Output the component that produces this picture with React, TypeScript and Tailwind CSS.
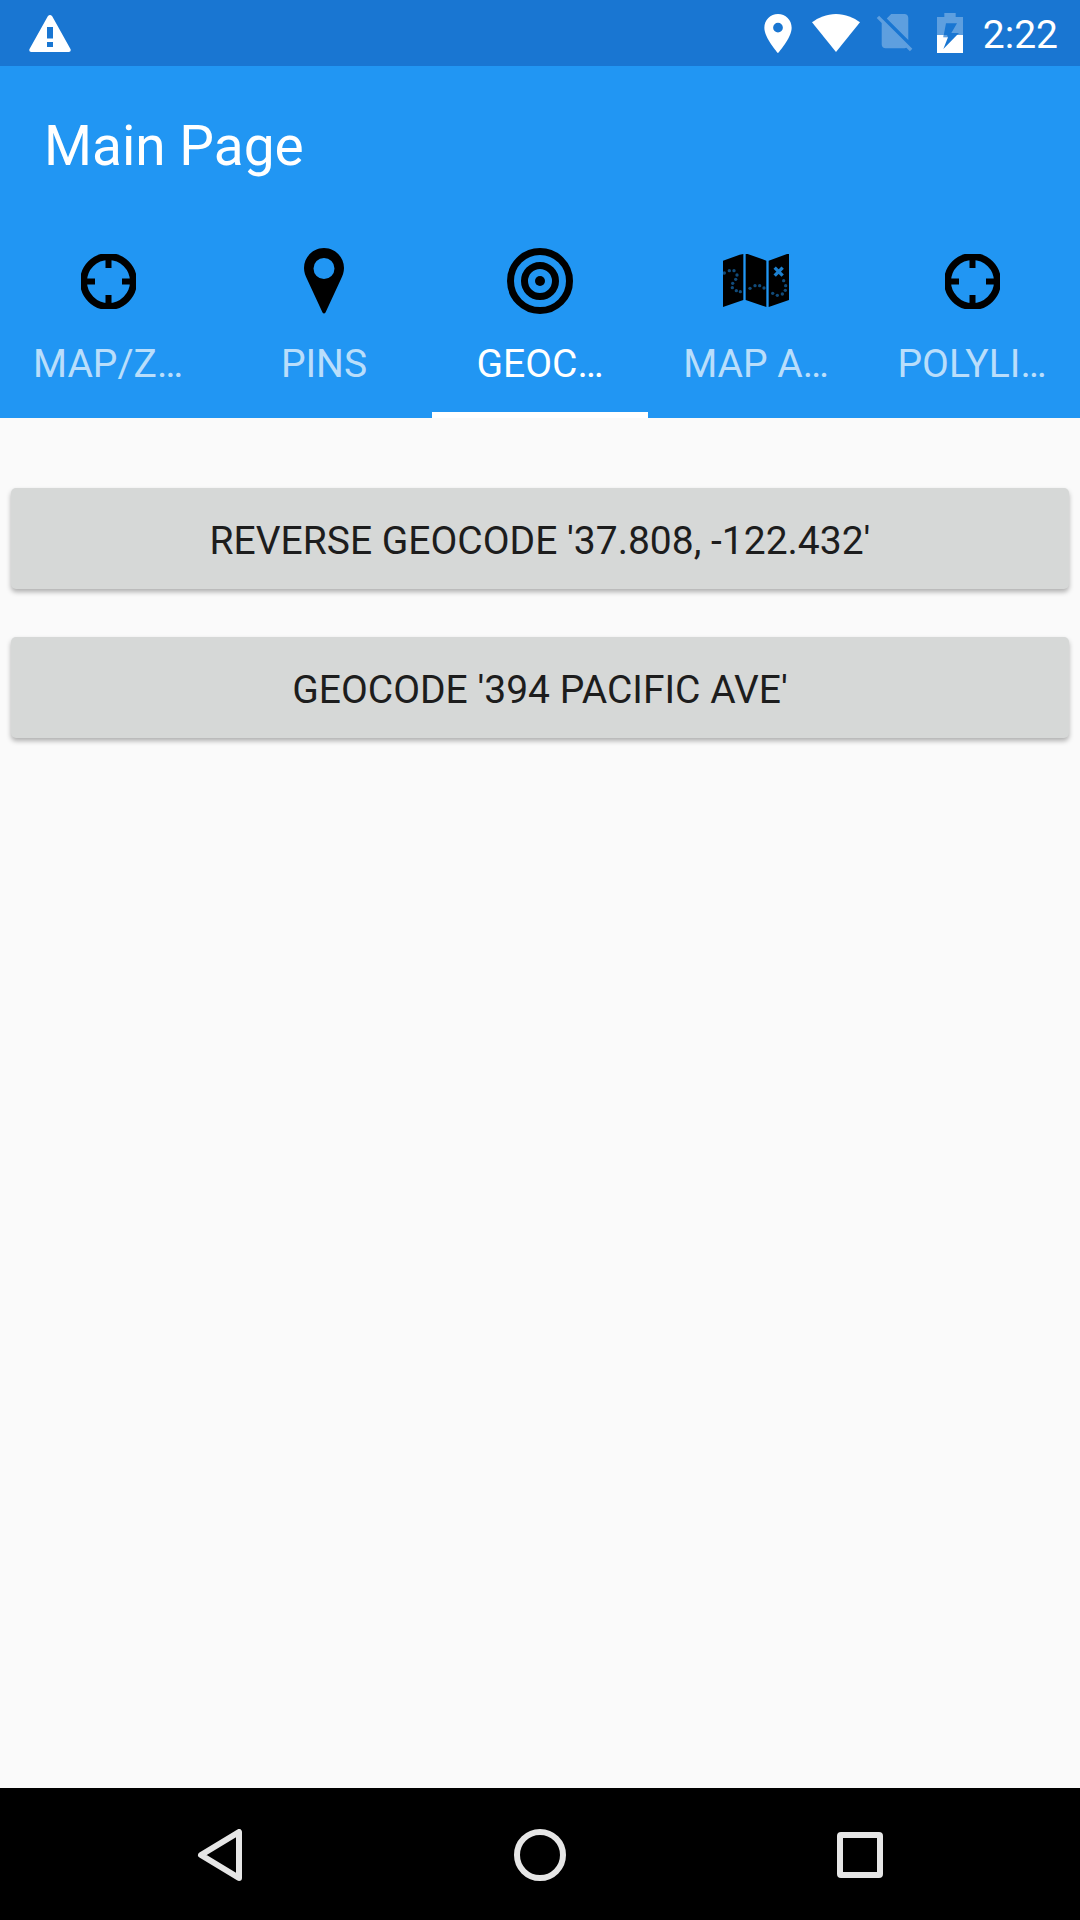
import { useState, type ReactNode } from "react";

function WarningIcon() {
  return (
    <svg aria-hidden="true" className="h-[37px] w-[42px]" viewBox="0 0 42 37" fill="white">
      <path
        fillRule="evenodd"
        d="M18.8 1.2Q21 -1.2 23.2 1.2L41.6 34.2Q42.2 36.8 39.8 37H2.2Q-.2 36.8 .4 34.2ZM18 12V23.5H24V12ZM18 27V32H24V27Z"
      />
    </svg>
  );
}

function LocationIcon() {
  return (
    <svg aria-hidden="true" className="h-[39px] w-[28px]" viewBox="5 2 14 20" fill="white">
      <path d="M12 2C8.13 2 5 5.13 5 9c0 5.25 7 13 7 13s7-7.75 7-13c0-3.87-3.13-7-7-7zm0 9.5a2.5 2.5 0 1 1 0-5 2.5 2.5 0 0 1 0 5z" />
    </svg>
  );
}

function WifiIcon() {
  return (
    <svg aria-hidden="true" className="h-[38px] w-[48px]" viewBox="0 0 144 114" fill="white">
      <path d="M0 25C18 11 44 0 72 0s54 11 72 25L72 114Z" />
    </svg>
  );
}

function NoSimIcon() {
  return (
    <svg aria-hidden="true" className="size-[38px]" viewBox="2 3 20 20" fill="white" fillOpacity="0.3">
      <path d="M18.99 5c0-1.1-.89-2-1.99-2h-7L7.66 5.34 19 16.68 18.99 5zM3.65 3.88L2.38 5.15 5 7.77V19c0 1.1.9 2 2 2h10.01c.35 0 .67-.1.96-.26l1.88 1.88 1.27-1.27L3.65 3.88z" />
    </svg>
  );
}

function BatteryIcon() {
  return (
    <svg aria-hidden="true" className="h-[40px] w-[26px]" viewBox="0 0 78 120" fill="white">
      <path
        fillOpacity="0.3"
        d="M22 0H56V12H78V66H60L66 60H43L60 31H27L19 73H33L30 66H0V12H22Z"
      />
      <path
        fillRule="evenodd"
        d="M0 66H20L19 73H33L19 108L60 66H78V120H0Z"
      />
    </svg>
  );
}

function CrosshairIcon() {
  return (
    <svg aria-hidden="true" className="size-[55px]" viewBox="0 0 55 55" fill="none" stroke="black">
      <circle cx="27.5" cy="27.5" r="25" strokeWidth="7" />
      <path d="M27.5 0V14M27.5 41V55M0 27.5H14M41 27.5H55" strokeWidth="6" />
    </svg>
  );
}

function PinIcon() {
  return (
    <svg aria-hidden="true" className="h-[66px] w-[40px]" viewBox="0 0 40 66">
      <path
        fillRule="evenodd"
        d="M20 0C31 0 40 9 40 20C40 24 38.500 28 37 31L21.500 64.500Q20 66.500 18.500 64.500L3 31C1.500 28 0 24 0 20C0 9 9 0 20 0ZM20 10a10.500 10.500 0 1 0 0 21a10.500 10.500 0 1 0 0 -21Z"
      />
    </svg>
  );
}

function TargetIcon() {
  return (
    <svg aria-hidden="true" className="size-[66px]" viewBox="0 0 66 66" fill="none" stroke="black" strokeWidth="7">
      <circle cx="33" cy="33" r="29.5" />
      <circle cx="33" cy="33" r="15.5" />
      <circle cx="33" cy="33" r="5" fill="black" stroke="none" />
    </svg>
  );
}

const trail = [
  [4, 57], [19, 50], [33, 50], [42, 63], [38, 76], [29, 88], [28, 101], [40, 110], [52, 113],
  [81, 103], [96, 95], [110, 95], [123, 102],
  [149, 118], [163, 124], [178, 120], [187, 109], [188, 95], [182, 80],
];

function TreasureMapIcon() {
  return (
    <svg aria-hidden="true" className="h-[54px] w-[66px]" viewBox="0 0 198 162">
      <path d="M0 20L50 2L61 0V138L0 159ZM68 0H74L130 20V159L68 138ZM137 20L192 0H198V138L137 159Z" />
      <g fill="#2196f3" fillOpacity="0.5">
        {trail.map(([x, y]) => (
          <circle key={`${x}-${y}`} cx={x} cy={y} r="5" />
        ))}
      </g>
      <path d="M155 41L179 65M179 41L155 65" stroke="#2196f3" strokeWidth="10" strokeOpacity="0.85" />
    </svg>
  );
}

const tabs: { label: string; icon: ReactNode }[] = [
  { label: "MAP/Z…", icon: <CrosshairIcon /> },
  { label: "PINS", icon: <PinIcon /> },
  { label: "GEOC…", icon: <TargetIcon /> },
  { label: "MAP A…", icon: <TreasureMapIcon /> },
  { label: "POLYLI…", icon: <CrosshairIcon /> },
];

const actions = ["REVERSE GEOCODE '37.808, -122.432'", "GEOCODE '394 PACIFIC AVE'"];

export default function App() {
  const [active, setActive] = useState(2);

  return (
    <div className="flex min-h-screen flex-col bg-[#fafafa] font-[Roboto,sans-serif]">
      <div className="flex h-[66px] items-center justify-between bg-[#1976d2] pr-[22px] pl-[29px] text-white">
        <WarningIcon />
        <div className="flex items-center">
          <LocationIcon />
          <span className="ml-5">
            <WifiIcon />
          </span>
          <span className="ml-4">
            <NoSimIcon />
          </span>
          <span className="ml-[23px]">
            <BatteryIcon />
          </span>
          <time className="ml-5 pt-[3px] text-[39px] leading-[46px]">2:22</time>
        </div>
      </div>

      <header className="bg-[#2196f3] text-white">
        <div className="flex h-[154px] items-center px-11 pt-[6px]">
          <h1 className="text-[55px] leading-[64px]">Main Page</h1>
        </div>
        <nav role="tablist" aria-label="Pages" className="grid grid-cols-5">
          {tabs.map((tab, i) => (
            <button
              key={tab.label}
              type="button"
              role="tab"
              aria-selected={i === active}
              onClick={() => setActive(i)}
              className={
                i === active
                  ? "flex h-[198px] flex-col items-center border-b-6 border-white pt-7 text-white"
                  : "flex h-[198px] flex-col items-center border-b-6 border-transparent pt-7 text-white/70"
              }
            >
              <span className="flex h-[66px] items-center">{tab.icon}</span>
              <span className="mt-[27px] text-[39px] leading-[46px]">{tab.label}</span>
            </button>
          ))}
        </nav>
      </header>

      <main className="flex flex-1 flex-col gap-12 px-[11px] pt-[70px]">
        {actions.map((label) => (
          <button
            key={label}
            type="button"
            className="h-[101px] rounded-[5px] bg-[#d6d8d7] pt-1 text-[39px] leading-[46px] text-[#1d1d1d] shadow-[0_3px_5px_rgba(0,0,0,0.3)]"
          >
            {label}
          </button>
        ))}
      </main>

      <nav aria-label="System" className="grid h-[132px] grid-cols-3 bg-black px-15 pt-[2px]">
        <button type="button" aria-label="Back" className="flex items-center justify-center">
          <svg aria-hidden="true" className="h-[52px] w-[46px]" viewBox="0 0 46 52" fill="none" stroke="#e6e6e6" strokeWidth="6" strokeLinejoin="round">
            <path d="M42 3V49L4 26Z" />
          </svg>
        </button>
        <button type="button" aria-label="Home" className="flex items-center justify-center">
          <span className="size-[52px] rounded-full border-6 border-[#e6e6e6]" />
        </button>
        <button type="button" aria-label="Recent apps" className="flex items-center justify-center">
          <span className="size-[46px] rounded-[4px] border-6 border-[#e6e6e6]" />
        </button>
      </nav>
    </div>
  );
}
